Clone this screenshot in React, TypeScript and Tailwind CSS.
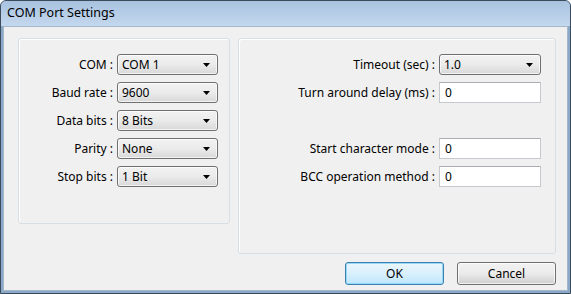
import React from 'react';

const leftRows = [
  { label: 'COM :', value: 'COM 1' },
  { label: 'Baud rate :', value: '9600' },
  { label: 'Data bits :', value: '8 Bits' },
  { label: 'Parity :', value: 'None' },
  { label: 'Stop bits :', value: '1 Bit' },
];

const Combo = ({ value, width }: { value: string; width: string }) => (
  <div
    className={`${width} h-[21px] flex items-center justify-between rounded-[3px] border border-[#707070] bg-gradient-to-b from-[#f2f2f2] via-[#ebebeb] to-[#d8d8d8] pl-[4px] pr-[7px] shadow-[inset_0_0_0_1px_rgba(255,255,255,0.7)]`}
  >
    <span className="text-[12px] text-black leading-none">{value}</span>
    <svg width="7" height="4" viewBox="0 0 7 4">
      <path d="M0 0h7L3.5 4z" fill="#000" />
    </svg>
  </div>
);

const Field = ({ value }: { value: string }) => (
  <div className="w-[102px] h-[21px] flex items-center border border-[#c5c8cd] border-t-[#abadb3] bg-white pl-[5px]">
    <span className="text-[12px] text-black leading-none">{value}</span>
  </div>
);

const Label = ({ text, width }: { text: string; width: string }) => (
  <span className={`${width} text-right text-[12px] text-black pr-[4px] leading-none whitespace-nowrap`}>{text}</span>
);

const App = () => {
  return (
    <div className="w-[571px] h-[294px] bg-[#8aa9c8] font-['Noto_Sans',sans-serif] flex flex-col rounded-t-[6px] border border-[#3b4b5c] overflow-hidden">
      <div className="h-[25px] flex items-center pl-[6px] bg-gradient-to-b from-[#a8c2df] to-[#c4d8ee]">
        <span className="text-[12.5px] text-black">COM Port Settings</span>
      </div>
      <div className="flex-1 mx-[2px] mb-[2px] bg-[#f0f0f0] border border-[#a6b7c9] flex flex-col pl-[14px] pr-[11px] pt-[11px]">
        <div className="flex gap-[8px]">
          <div className="w-[212px] h-[186px] rounded-[3px] border border-[#d5dfe5] shadow-[inset_1px_1px_0_#fff] flex flex-col gap-[7px] pt-[15px]">
            {leftRows.map((r) => (
              <div key={r.label} className="flex items-center">
                <Label text={r.label} width="w-[98px]" />
                <Combo value={r.value} width="w-[101px]" />
              </div>
            ))}
          </div>
          <div className="w-[318px] h-[216px] rounded-[3px] border border-[#d5dfe5] shadow-[inset_1px_1px_0_#fff] flex flex-col gap-[7px] pt-[15px]">
            <div className="flex items-center">
              <Label text="Timeout (sec) :" width="w-[200px]" />
              <Combo value="1.0" width="w-[102px]" />
            </div>
            <div className="flex items-center">
              <Label text="Turn around delay (ms) :" width="w-[200px]" />
              <Field value="0" />
            </div>
            <div className="h-[21px]" />
            <div className="flex items-center">
              <Label text="Start character mode :" width="w-[200px]" />
              <Field value="0" />
            </div>
            <div className="flex items-center">
              <Label text="BCC operation method :" width="w-[200px]" />
              <Field value="0" />
            </div>
          </div>
        </div>
        <div className="flex justify-end gap-[13px] mt-[8px]">
          <button className="w-[99px] h-[23px] rounded-[3px] border border-[#3c7fb1] bg-gradient-to-b from-[#eaf6fd] via-[#d9f0fc] to-[#bee6fd] shadow-[inset_0_0_0_1px_#97d8f8] text-[12px] text-black">
            OK
          </button>
          <button className="w-[99px] h-[23px] rounded-[3px] border border-[#707070] bg-gradient-to-b from-[#f2f2f2] via-[#ebebeb] to-[#cfcfcf] shadow-[inset_0_0_0_1px_rgba(255,255,255,0.7)] text-[12px] text-black">
            Cancel
          </button>
        </div>
      </div>
    </div>
  );
};

export default App;
